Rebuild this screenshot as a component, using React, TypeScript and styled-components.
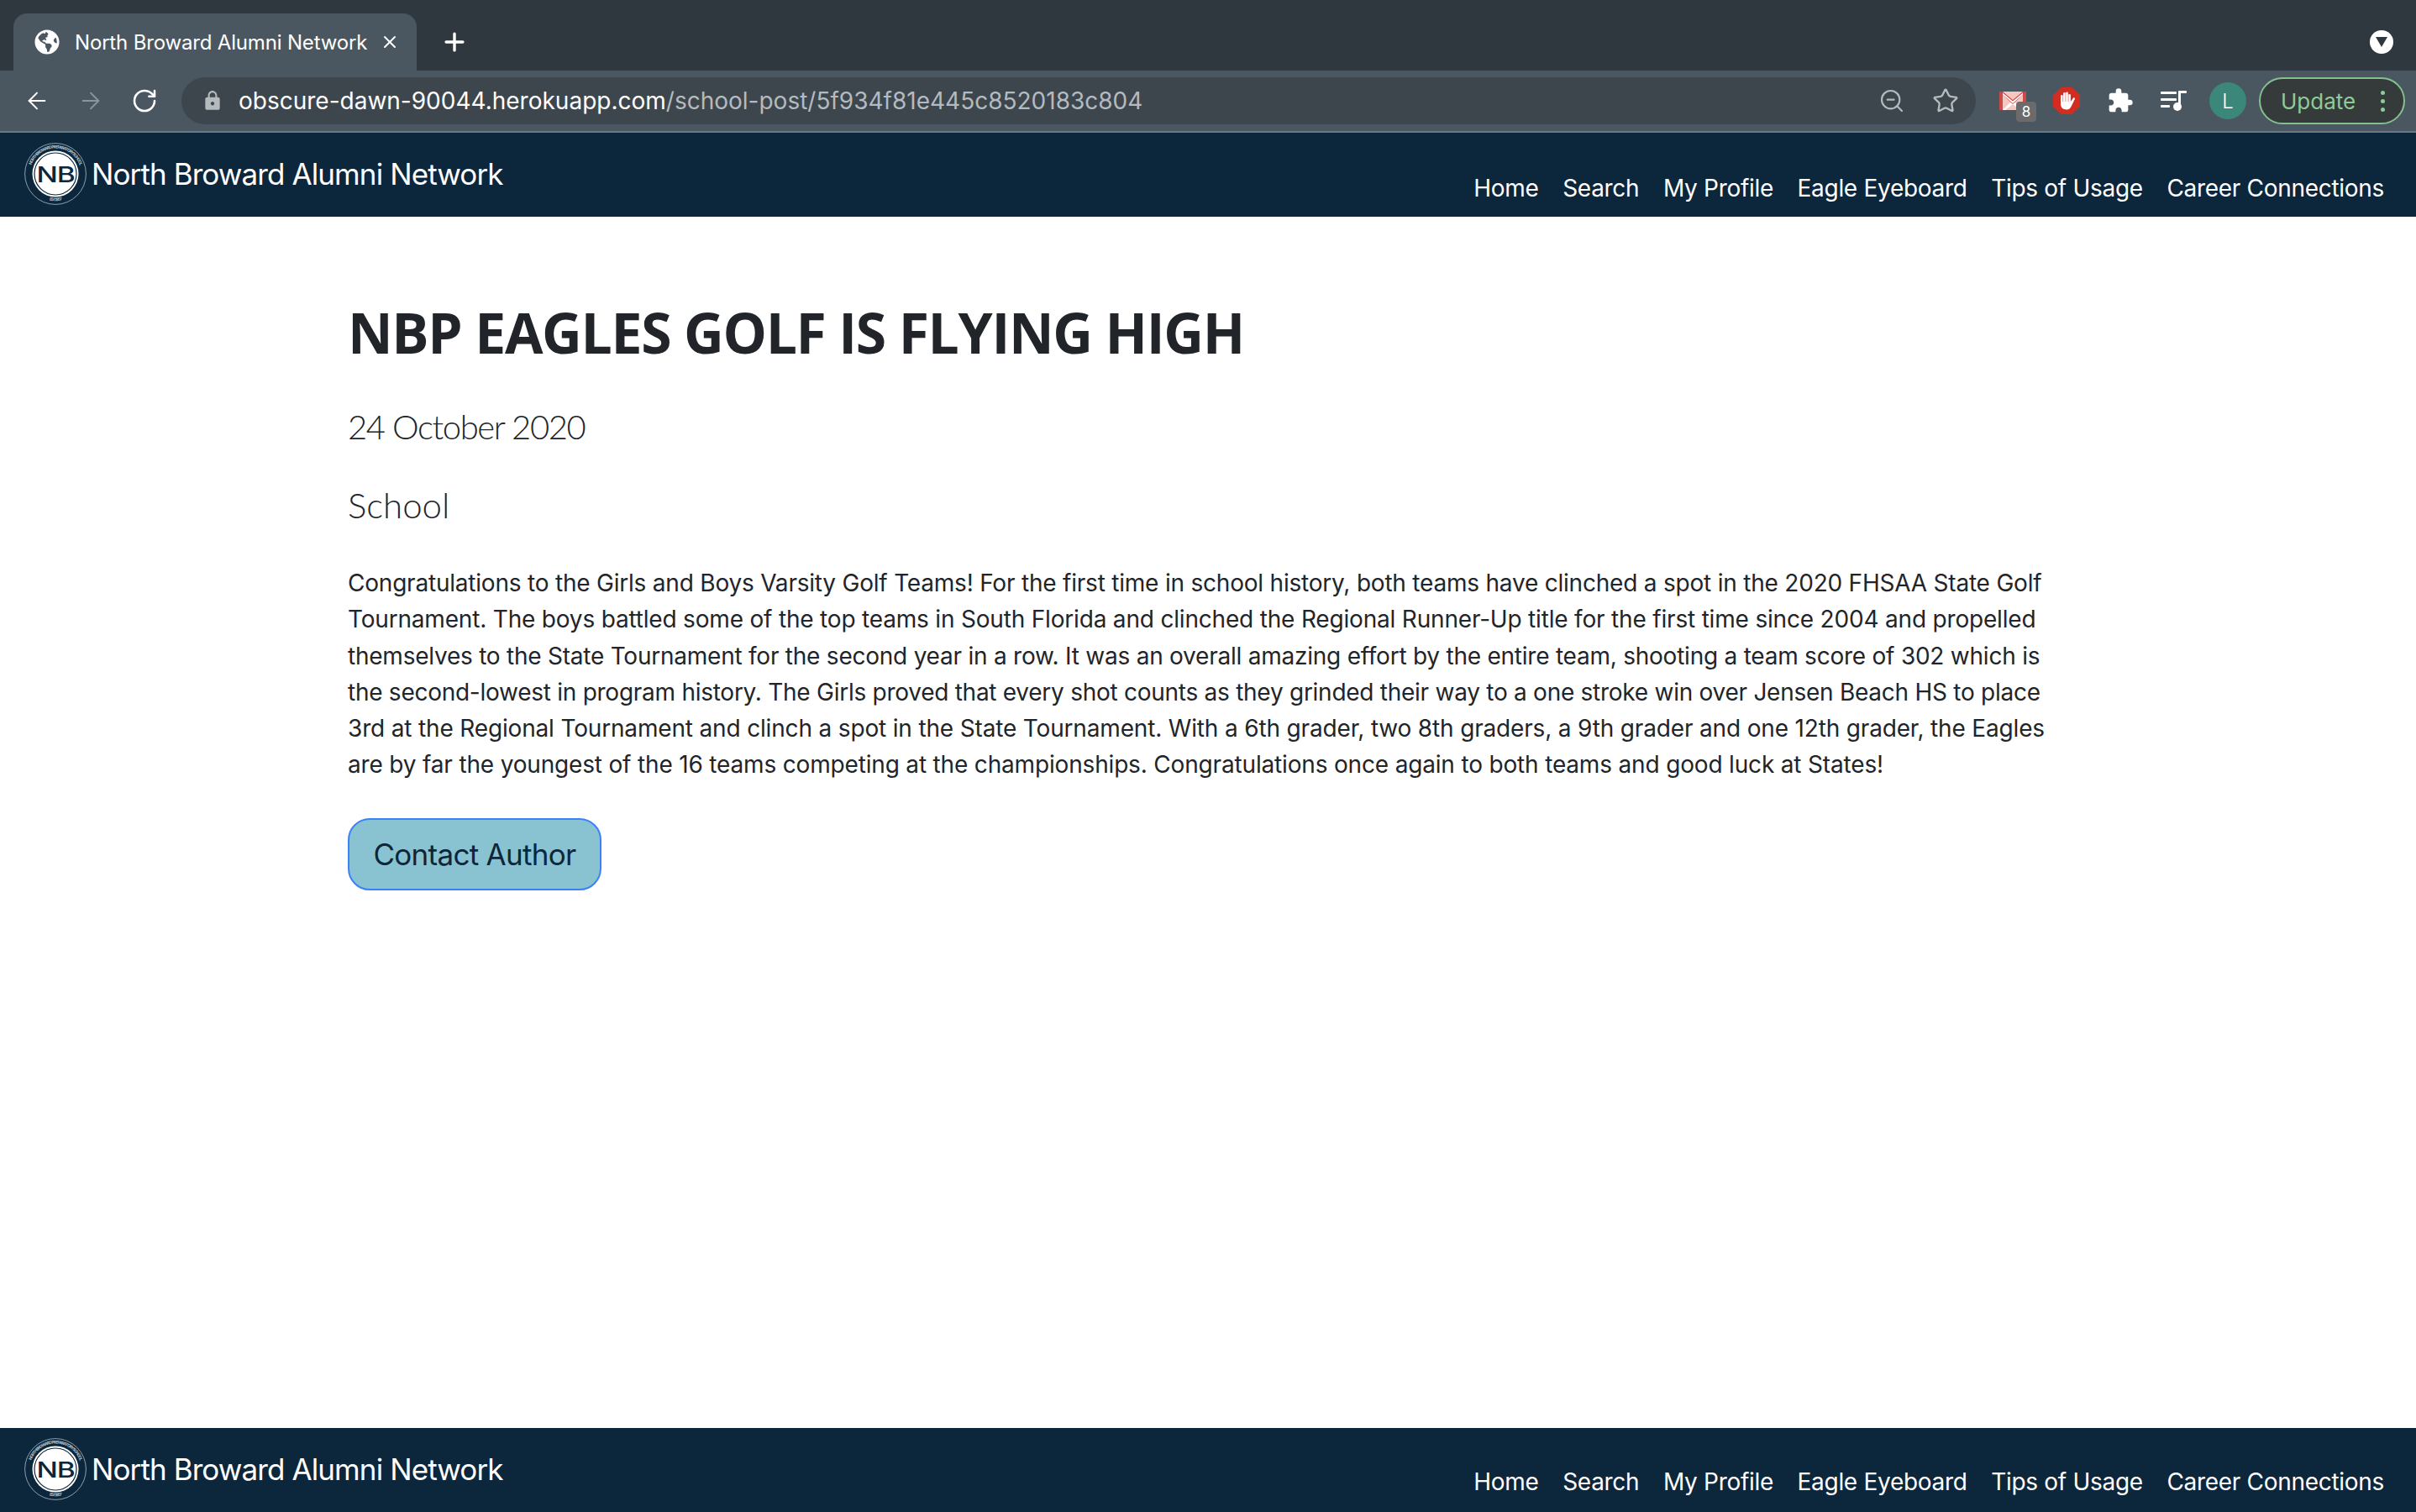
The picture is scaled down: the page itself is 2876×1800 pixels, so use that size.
import React from 'react';
import styled, { createGlobalStyle } from 'styled-components';
import { ArrowLeft, ArrowRight, RotateCw, Plus, X, Star, ZoomOut } from 'lucide-react';
import { MdLock, MdExtension } from 'react-icons/md';
import { FaGlobeAmericas } from 'react-icons/fa';

const GlobalStyle = createGlobalStyle`
  html, body { margin: 0; padding: 0; background: #fff; }
  * { box-sizing: border-box; }
  body { font-family: Inter, "Liberation Sans", sans-serif; }
`;

const Page = styled.div`
  width: 2876px;
  height: 1800px;
  display: flex;
  flex-direction: column;
  overflow: hidden;
`;

const TabStrip = styled.div`
  height: 84px;
  background: #2f383e;
  display: flex;
  align-items: flex-end;
  padding-left: 16px;
  flex-shrink: 0;
`;

const Tab = styled.div`
  width: 480px;
  height: 68px;
  background: #4a5761;
  border-radius: 16px 16px 0 0;
  display: flex;
  align-items: center;
  padding-left: 25px;
  color: #fff;
  font-size: 24px;
  letter-spacing: -0.17px;
`;

const TabTitle = styled.span`
  margin-left: 18px;
  width: 363px;
  white-space: nowrap;
`;

const NewTab = styled.div`
  margin-left: 28px;
  height: 68px;
  display: flex;
  align-items: center;
  color: #fff;
`;

const StripEnd = styled.div`
  margin-left: auto;
  margin-right: 27px;
  height: 68px;
  display: flex;
  align-items: center;
`;

const DownCircle = styled.div`
  width: 28px;
  height: 28px;
  border-radius: 50%;
  background: #fff;
  display: flex;
  align-items: center;
  justify-content: center;
`;

const Toolbar = styled.div`
  height: 74px;
  background: #4a5761;
  border-bottom: 2px solid #6c7a84;
  display: flex;
  align-items: center;
  padding: 0 13px 0 28px;
  flex-shrink: 0;
`;

const ToolButton = styled.div<{ $muted?: boolean }>`
  width: 32px;
  height: 32px;
  margin-right: 32px;
  display: flex;
  align-items: center;
  justify-content: center;
  color: ${(p) => (p.$muted ? '#8b959c' : '#fff')};
`;

const AddressBar = styled.div`
  width: 2136px;
  height: 56px;
  margin-left: -4px;
  background: #3d464d;
  border-radius: 28px;
  display: flex;
  align-items: center;
  padding-left: 24px;
  padding-right: 20px;
  font-size: 28px;
`;

const Url = styled.div`
  margin-left: 18px;
  white-space: nowrap;
  color: #fff;
  flex: 1;
`;

const UrlPath = styled.span`
  color: #b4babf;
`;

const AddressIcon = styled.div`
  width: 32px;
  height: 32px;
  margin-left: 32px;
  display: flex;
  align-items: center;
  justify-content: center;
  color: #b5babd;
`;

const Extensions = styled.div`
  flex: 1;
  display: flex;
  align-items: center;
  padding-left: 28px;
`;

const ExtensionSlot = styled.div`
  position: relative;
  width: 32px;
  height: 32px;
  margin-right: 32px;
  display: flex;
  align-items: center;
  justify-content: center;
  color: #fff;
`;

const Badge = styled.span`
  position: absolute;
  left: 20px;
  top: 17px;
  width: 24px;
  height: 24px;
  border-radius: 4px;
  background: #6b6b6b;
  color: #fff;
  font-size: 17px;
  display: flex;
  align-items: center;
  justify-content: center;
`;

const Avatar = styled.div`
  width: 44px;
  height: 44px;
  border-radius: 50%;
  background: #3b887a;
  color: #fff;
  font-size: 24px;
  font-weight: 300;
  display: flex;
  align-items: center;
  justify-content: center;
  margin-left: -6px;
`;

const UpdatePill = styled.div`
  margin-left: 15px;
  width: 174px;
  height: 56px;
  border-radius: 28px;
  border: 2px solid #84bf8e;
  background: #343b3a;
  color: #8fca99;
  font-size: 26px;
  display: flex;
  align-items: center;
  padding-left: 24px;
`;

const Dots = styled.div`
  margin-left: 30px;
  display: flex;
  flex-direction: column;
  gap: 5px;
`;

const Dot = styled.span`
  width: 5px;
  height: 5px;
  border-radius: 50%;
  background: #8fca99;
`;

const NavBar = styled.nav`
  height: 100px;
  background: #0c263b;
  display: flex;
  align-items: stretch;
  justify-content: space-between;
  padding: 0 38px 0 29px;
  flex-shrink: 0;
`;

const FooterBar = styled(NavBar)`
  margin-top: auto;
`;

const Brand = styled.div`
  display: flex;
  align-items: center;
  gap: 6px;
  color: #fff;
  font-size: 35px;
  padding-bottom: 2px;
  letter-spacing: -0.9px;
`;

const NavLinks = styled.div<{ $bottom: number }>`
  display: flex;
  align-items: flex-end;
  gap: 28.6px;
  padding-bottom: ${(p) => p.$bottom}px;
`;

const NavLink = styled.a`
  color: #fff;
  font-size: 28px;
  white-space: nowrap;
  letter-spacing: -0.3px;
`;

const Main = styled.main`
  padding: 0 0 0 414px;
  color: #212529;
`;

const Title = styled.h1`
  margin: 101px 0 0;
  font-family: "Open Sans", sans-serif;
  font-weight: 700;
  font-size: 66px;
  line-height: 72px;
  letter-spacing: -1.33px;
`;

const Meta = styled.div<{ $gap: number; $size: number; $tracking: number }>`
  font-family: Lato, sans-serif;
  font-weight: 300;
  font-size: ${(p) => p.$size}px;
  letter-spacing: ${(p) => p.$tracking}px;
  line-height: 48px;
  margin-top: ${(p) => p.$gap}px;
`;

const Body = styled.p`
  margin: 48px 0 0;
  font-size: 28px;
  line-height: 43.3px;
`;

const Line = styled.span<{ $tracking: number }>`
  display: block;
  white-space: nowrap;
  letter-spacing: ${(p) => p.$tracking}px;
`;

const ContactButton = styled.button`
  margin-top: 41px;
  display: block;
  width: 302px;
  height: 86px;
  border-radius: 26px;
  border: 2px solid #3b82f6;
  background: #89c2d1;
  color: #0c263b;
  font-family: Inter, sans-serif;
  font-size: 35px;
  letter-spacing: -0.7px;
  padding: 0;
`;

const links = ['Home', 'Search', 'My Profile', 'Eagle Eyeboard', 'Tips of Usage', 'Career Connections'];

const paragraph = [
  { text: 'Congratulations to the Girls and Boys Varsity Golf Teams! For the first time in school history, both teams have clinched a spot in the 2020 FHSAA State Golf', tracking: -0.21 },
  { text: 'Tournament. The boys battled some of the top teams in South Florida and clinched the Regional Runner-Up title for the first time since 2004 and propelled', tracking: -0.186 },
  { text: 'themselves to the State Tournament for the second year in a row. It was an overall amazing effort by the entire team, shooting a team score of 302 which is', tracking: -0.233 },
  { text: 'the second-lowest in program history. The Girls proved that every shot counts as they grinded their way to a one stroke win over Jensen Beach HS to place', tracking: -0.263 },
  { text: '3rd at the Regional Tournament and clinch a spot in the State Tournament. With a 6th grader, two 8th graders, a 9th grader and one 12th grader, the Eagles', tracking: -0.163 },
  { text: 'are by far the youngest of the 16 teams competing at the championships. Congratulations once again to both teams and good luck at States!', tracking: -0.17 },
];

function Logo({ id }: { id: string }) {
  return (
    <svg width="74" height="74" viewBox="0 0 74 74">
      <defs>
        <path id={`${id}-top`} d="M10.5 52.3a30.6 30.6 0 1 1 53 0" />
        <path id={`${id}-bottom`} d="M24 66.5a32 32 0 0 0 26 0" />
      </defs>
      <circle cx="37" cy="37" r="36.4" fill="#0c263b" stroke="#8fa0ad" strokeWidth="1" />
      <text fontSize="4.9" fontWeight="700" fill="#b9c4cc" fontFamily="Inter, sans-serif">
        <textPath href={`#${id}-top`} startOffset="50%" textAnchor="middle">
          NORTH BROWARD PREPARATORY SCHOOL
        </textPath>
      </text>
      <text fontSize="4.9" fontWeight="700" fill="#b9c4cc" fontFamily="Inter, sans-serif">
        <textPath href={`#${id}-bottom`} startOffset="50%" textAnchor="middle">
          EST.1957
        </textPath>
      </text>
      <circle cx="37" cy="37" r="27.5" fill="#fff" />
      <circle cx="37" cy="37" r="25" fill="#fff" stroke="#0c263b" strokeWidth="1.2" />
      <text
        x="37"
        y="46.5"
        textAnchor="middle"
        fontSize="26"
        fontWeight="500"
        textLength="45"
        lengthAdjust="spacingAndGlyphs"
        fill="#0c263b"
        fontFamily="Inter, sans-serif"
      >
        NB
      </text>
    </svg>
  );
}

function GmailIcon() {
  return (
    <svg width="32" height="22" viewBox="0 0 32 22">
      <rect width="32" height="22" fill="#f4c7c3" />
      <path d="M0 0h4v22H0zM28 0h4v22h-4z" fill="#cc4a47" />
      <path d="M0 0h4l12 10L28 0h4L16 15z" fill="#d4403c" />
      <path d="M4 1.5l12 10 12-10v2L16 14 4 3.5z" fill="#fff" />
      <path d="M4 22l9-9 3 2-9 7zM28 22l-9-9-3 2 9 7z" fill="#fff" />
    </svg>
  );
}

function AdBlockIcon() {
  return (
    <svg width="32" height="32" viewBox="0 0 32 32">
      <path d="M9.5 0h13L32 9.5v13L22.5 32h-13L0 22.5v-13z" fill="#d22d20" />
      <g fill="#fff">
        <rect x="9" y="9" width="2.6" height="12" rx="1.3" />
        <rect x="12.1" y="6" width="2.6" height="14" rx="1.3" />
        <rect x="15.2" y="5.5" width="2.6" height="14" rx="1.3" />
        <rect x="18.3" y="8" width="2.6" height="12" rx="1.3" />
        <path d="M9 17h11.9l3-4.2c.9-1.2 2.6-.1 1.9 1.2l-3.6 7.5c-1.2 3-3.2 5-6.200 5-4.200 0-7-2.800-7-6.500z" />
      </g>
    </svg>
  );
}

function QueueIcon() {
  return (
    <svg width="32" height="24" viewBox="0 0 32 24" fill="#fff">
      <rect y="1" width="19" height="3" rx="1" />
      <rect y="9" width="19" height="3" rx="1" />
      <rect y="17" width="11" height="3" rx="1" />
      <rect x="21" y="1" width="3" height="18" />
      <rect x="21" y="0" width="10" height="3" rx="1" />
      <circle cx="20" cy="19" r="5" />
    </svg>
  );
}

function Bar({ id, Wrapper, bottom }: { id: string; Wrapper: typeof NavBar; bottom: number }) {
  return (
    <Wrapper>
      <Brand>
        <Logo id={id} />
        North Broward Alumni Network
      </Brand>
      <NavLinks $bottom={bottom}>
        {links.map((l) => (
          <NavLink key={l}>{l}</NavLink>
        ))}
      </NavLinks>
    </Wrapper>
  );
}

export default function App() {
  return (
    <Page>
      <GlobalStyle />
      <TabStrip>
        <Tab>
          <FaGlobeAmericas size={30} color="#fff" />
          <TabTitle>North Broward Alumni Network</TabTitle>
          <X size={24} color="#fff" strokeWidth={2} />
        </Tab>
        <NewTab>
          <Plus size={34} strokeWidth={2.4} />
        </NewTab>
        <StripEnd>
          <DownCircle>
            <svg width="14" height="12" viewBox="0 0 14 12">
              <path d="M0 0h14L7 12z" fill="#2f383e" />
            </svg>
          </DownCircle>
        </StripEnd>
      </TabStrip>
      <Toolbar>
        <ToolButton>
          <ArrowLeft size={44} strokeWidth={1.5} />
        </ToolButton>
        <ToolButton $muted>
          <ArrowRight size={44} strokeWidth={1.5} />
        </ToolButton>
        <ToolButton>
          <RotateCw size={34} strokeWidth={1.9} />
        </ToolButton>
        <AddressBar>
          <MdLock size={26} color="#b5babd" />
          <Url>
            obscure-dawn-90044.herokuapp.com<UrlPath>/school-post/5f934f81e445c8520183c804</UrlPath>
          </Url>
          <AddressIcon>
            <ZoomOut size={32} strokeWidth={1.6} />
          </AddressIcon>
          <AddressIcon>
            <Star size={32} strokeWidth={1.8} />
          </AddressIcon>
        </AddressBar>
        <Extensions>
          <ExtensionSlot>
            <GmailIcon />
            <Badge>8</Badge>
          </ExtensionSlot>
          <ExtensionSlot>
            <AdBlockIcon />
          </ExtensionSlot>
          <ExtensionSlot>
            <MdExtension size={36} />
          </ExtensionSlot>
          <ExtensionSlot>
            <QueueIcon />
          </ExtensionSlot>
          <Avatar>L</Avatar>
          <UpdatePill>
            Update
            <Dots>
              <Dot />
              <Dot />
              <Dot />
            </Dots>
          </UpdatePill>
        </Extensions>
      </Toolbar>
      <Bar id="top" Wrapper={NavBar} bottom={17} />
      <Main>
        <Title>NBP EAGLES GOLF IS FLYING HIGH</Title>
        <Meta $gap={53} $size={40} $tracking={-1.4}>
          24 October 2020
        </Meta>
        <Meta $gap={45} $size={42} $tracking={0}>
          School
        </Meta>
        <Body>
          {paragraph.map((l) => (
            <Line key={l.text} $tracking={l.tracking}>
              {l.text}
            </Line>
          ))}
        </Body>
        <ContactButton>Contact Author</ContactButton>
      </Main>
      <Bar id="bottom" Wrapper={FooterBar} bottom={19} />
    </Page>
  );
}
